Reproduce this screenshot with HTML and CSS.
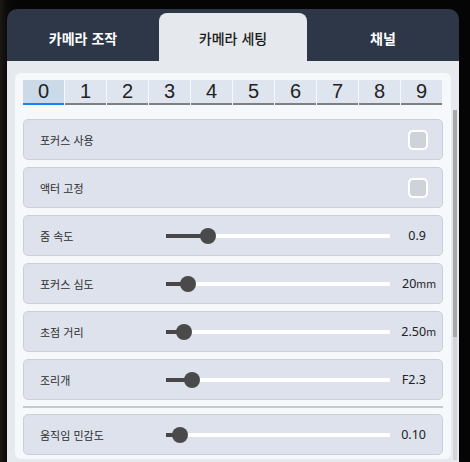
FILE: index.html
```html
<!DOCTYPE html>
<html lang="ko">
<head>
<meta charset="utf-8">
<link rel="stylesheet" href="styles.css">
</head>
<body>
<div class="window">
  <div class="tabs">
    <div class="tab">카메라 조작</div>
    <div class="tab active">카메라 세팅</div>
    <div class="tab">채널</div>
  </div>
  <div class="content">
    <div class="panel">
      <div class="nums">
        <div class="num on">0</div>
        <div class="num">1</div>
        <div class="num">2</div>
        <div class="num">3</div>
        <div class="num">4</div>
        <div class="num">5</div>
        <div class="num">6</div>
        <div class="num">7</div>
        <div class="num">8</div>
        <div class="num">9</div>
      </div>
      <div class="rows">
        <div class="row"><span class="label">포커스 사용</span><span class="check"></span></div>
        <div class="row"><span class="label">액터 고정</span><span class="check"></span></div>
        <div class="row"><span class="label">줌 속도</span><div class="slider"><div class="fill" style="width:42px"></div><div class="thumb" style="left:34px"></div></div><span class="value">0.9</span></div>
        <div class="row"><span class="label">포커스 심도</span><div class="slider"><div class="fill" style="width:22px"></div><div class="thumb" style="left:14px"></div></div><span class="value unit">20<small>mm</small></span></div>
        <div class="row"><span class="label">초점 거리</span><div class="slider"><div class="fill" style="width:18px"></div><div class="thumb" style="left:10px"></div></div><span class="value unit">2.50<small>m</small></span></div>
        <div class="row"><span class="label">조리개</span><div class="slider"><div class="fill" style="width:26px"></div><div class="thumb" style="left:18px"></div></div><span class="value">F2.3</span></div>
        <div class="sep"></div>
        <div class="row"><span class="label">움직임 민감도</span><div class="slider"><div class="fill" style="width:14px"></div><div class="thumb" style="left:6px"></div></div><span class="value">0.10</span></div>
      </div>
    </div>
    <div class="scroll"><div class="scroll-thumb"></div></div>
  </div>
</div>
</body>
</html>
```

FILE: styles.css
```css
html, body {
  margin: 0;
  padding: 0;
}
body {
  width: 470px;
  height: 462px;
  overflow: hidden;
  background: linear-gradient(90deg, #1c1814 0px, #0b0a09 7px, #050505 20px);
  font-family: "Noto Sans CJK KR", "Noto Sans", sans-serif;
}
.window {
  margin: 9px 0 0 7px;
  width: 452px;
  height: 460px;
  background: #2e3747;
  border-radius: 10px 10px 0 0;
  overflow: hidden;
}
.tabs {
  display: grid;
  grid-template-columns: 152px 148px 152px;
  height: 52px;
}
.tab {
  display: flex;
  align-items: center;
  justify-content: center;
  padding-top: 6px;
  box-sizing: border-box;
  color: #ffffff;
  font-size: 14px;
  font-weight: 700;
}
.tab.active {
  margin-top: 4px;
  padding-top: 2px;
  background: #e5e8ec;
  color: #1a1a1a;
  font-weight: 500;
  border-radius: 8px 8px 0 0;
}
.content {
  display: flex;
  gap: 2px;
  background: #e6e9ee;
  padding: 12px 2px 0 8px;
  height: 420px;
}
.panel {
  width: 436px;
  box-sizing: border-box;
  background: #f5f9fc;
  border-radius: 6px;
  padding: 7px 8px 4px;
  height: 386px;
}
.nums {
  display: grid;
  grid-template-columns: repeat(10, 41px);
  column-gap: 1px;
}
.num {
  height: 23px;
  background: #dfe5ee;
  border-bottom: 2px solid #7f7f7f;
  font-family: "Liberation Sans", Arial, sans-serif;
  font-size: 20px;
  line-height: 23px;
  text-align: center;
  color: #222222;
}
.num.on {
  background: #ccd9e6;
  border-bottom-color: #1682f4;
}
.rows {
  display: flex;
  flex-direction: column;
  gap: 7px;
  margin-top: 14px;
}
.row {
  display: flex;
  align-items: center;
  height: 41px;
  box-sizing: border-box;
  padding: 0 14px 0 16px;
  background: #dde2ed;
  border: 1px solid #cbd0d8;
  border-radius: 5px;
}
.label {
  width: 126px;
  flex: none;
  font-size: 11px;
  color: #2e2e2e;
}
.check {
  margin-left: auto;
  width: 20px;
  height: 20px;
  box-sizing: border-box;
  border: 2px solid #ffffff;
  border-radius: 5px;
  background: #ced3da;
}
.slider {
  position: relative;
  width: 224px;
  height: 4px;
  background: #ffffff;
  flex: none;
}
.fill {
  height: 4px;
  background: #464646;
}
.thumb {
  position: absolute;
  top: -6px;
  width: 16px;
  height: 16px;
  border-radius: 50%;
  background: #4a4a4a;
}
.value {
  margin-left: auto;
  margin-right: 2px;
  font-family: "Noto Sans", sans-serif;
  font-size: 12.5px;
  color: #222222;
  white-space: nowrap;
}
.value.unit {
  margin-right: -8px;
}
.value small {
  font-size: 10.5px;
}
.sep {
  height: 2px;
  background: #c5c9d1;
  margin: -1px 0 -1px;
}
.scroll {
  width: 4px;
  margin-top: 37px;
  background: #d3d5d8;
  height: 350px;
}
.scroll-thumb {
  height: 227px;
  background: #a9a9a9;
}
```
